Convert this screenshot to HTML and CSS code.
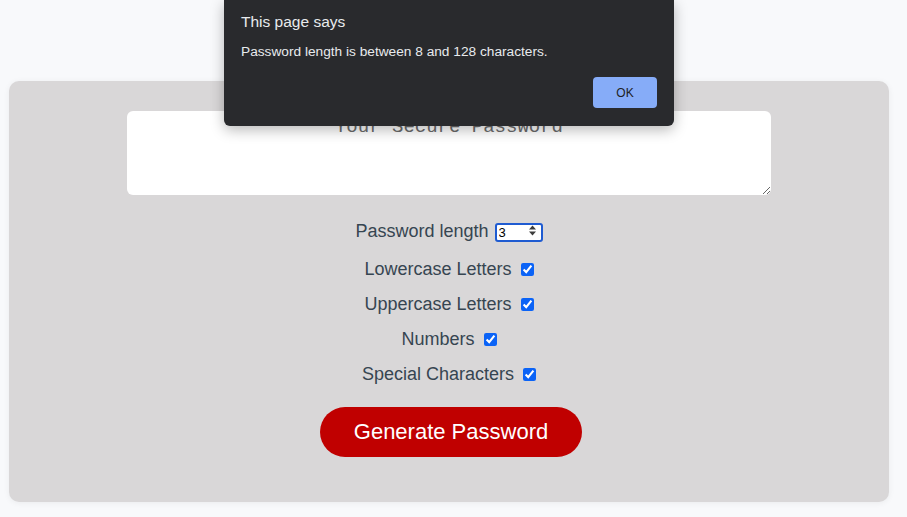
FILE: index.html
```html
<!DOCTYPE html>
<html>
<head>
<meta charset="utf-8">
<link rel="stylesheet" href="styles.css">
</head>
<body>
<main class="card">
  <textarea class="output" placeholder="Your Secure Password" readonly></textarea>
  <div class="options">
    <div class="row first">
      <label for="len">Password length</label>
      <span class="num">
        <input id="len" type="number" value="3">
        <svg class="spin" width="9" height="11" viewBox="0 0 9 11"><path d="M4.5 0.5 L8 4.5 H1 Z M4.5 10.5 L8 6.5 H1 Z" fill="#3c3c3c"/></svg>
      </span>
    </div>
    <div class="row"><label>Lowercase Letters</label><input type="checkbox" checked></div>
    <div class="row"><label>Uppercase Letters</label><input type="checkbox" checked></div>
    <div class="row"><label>Numbers</label><input type="checkbox" checked></div>
    <div class="row"><label>Special Characters</label><input type="checkbox" checked></div>
  </div>
  <button class="generate">Generate Password</button>
</main>
<div class="dialog">
  <div class="d-title">This page says</div>
  <div class="d-msg">Password length is between 8 and 128 characters.</div>
  <div class="d-actions"><button class="ok">OK</button></div>
</div>
</body>
</html>
```
FILE: styles.css
```css
html, body {
  margin: 0;
  padding: 0;
  background: #f8f9fb;
  overflow: hidden;
}
body {
  font-family: "Liberation Sans", Arial, sans-serif;
  padding-top: 81px;
  height: 517px;
  box-sizing: border-box;
}
.card {
  margin: 0 18px 0 9px;
  height: 421px;
  box-sizing: border-box;
  background: #d9d7d8;
  border-radius: 10px;
  box-shadow: 0 1px 6px rgba(0,0,0,0.06);
  display: flex;
  flex-direction: column;
  align-items: center;
  padding-top: 30px;
}
.output {
  width: 644px;
  height: 84px;
  box-sizing: border-box;
  border: none;
  border-radius: 6px;
  background: #fff;
  resize: vertical;
  font-family: "Liberation Mono", "Courier New", monospace;
  font-size: 19px;
  text-align: center;
  padding: 5px 10px;
  outline: none;
}
.output::placeholder { color: #6b6b6b; }
.options {
  margin-top: 26px;
  display: flex;
  flex-direction: column;
  align-items: center;
  gap: 15px;
}
.row {
  display: flex;
  align-items: center;
  height: 20px;
  font-size: 18px;
  color: #364551;
}
.row.first { margin-bottom: 3px; }
.row input[type=checkbox] {
  width: 13px;
  height: 13px;
  margin: 0 0 0 9px;
  accent-color: #0b63f6;
}
.num {
  position: relative;
  margin-left: 6px;
  display: inline-block;
  width: 48px;
  height: 19px;
  top: -1px;
}
.num input {
  width: 48px;
  height: 19px;
  box-sizing: border-box;
  border: 2px solid #1f5bd1;
  border-radius: 3px;
  background: #fff;
  font-family: "Liberation Sans", Arial, sans-serif;
  font-size: 13px;
  padding: 0 0 0 2px;
  color: #000;
  outline: none;
  -moz-appearance: textfield;
}
.num input::-webkit-inner-spin-button,
.num input::-webkit-outer-spin-button { -webkit-appearance: none; margin: 0; }
.spin {
  position: absolute;
  right: 6px;
  top: 4px;
}
.generate {
  margin-top: 23px;
  margin-left: 4px;
  width: 262px;
  height: 50px;
  border: none;
  border-radius: 25px;
  background: #c00000;
  color: #fff;
  font-family: "Liberation Sans", Arial, sans-serif;
  font-size: 22px;
  padding: 0;
}
.dialog {
  position: absolute;
  top: 0;
  left: 224px;
  width: 450px;
  height: 126px;
  box-sizing: border-box;
  background: #292a2d;
  border-radius: 0 0 6px 6px;
  box-shadow: 0 4px 14px rgba(0,0,0,0.28);
  padding: 13px 17px 0 17px;
  font-family: "Liberation Sans", Arial, sans-serif;
  color: #e8eaed;
}
.d-title {
  font-size: 15.5px;
  line-height: 18px;
}
.d-msg {
  margin-top: 13px;
  font-size: 13.7px;
  line-height: 16px;
}
.d-actions {
  display: flex;
  justify-content: flex-end;
  margin-top: 17px;
}
.ok {
  width: 64px;
  height: 31px;
  border: none;
  border-radius: 4px;
  background: #86acf8;
  color: #202124;
  font-family: "Liberation Sans", Arial, sans-serif;
  font-size: 12px;
  padding: 0;
}
```
